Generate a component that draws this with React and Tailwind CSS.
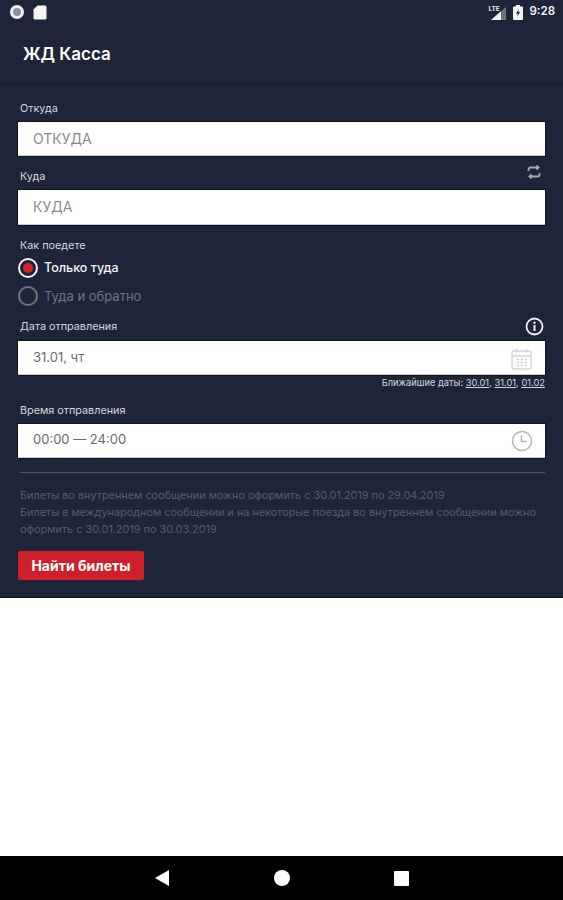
import React from 'react';

const font = { fontFamily: 'Inter, "Noto Sans", sans-serif' };

function Field({ value, children, height = 'h-[34px]', valueClass = 'text-[14px] text-[#8a8a8a]' }) {
  return (
    <div className={`flex items-center justify-between ${height} bg-white border-b border-[#c9ccd4] shadow-[0_0_0_1px_#10131f] pl-[15px] pr-[13px]`}>
      <span className={`leading-none ${valueClass}`}>{value}</span>
      {children}
    </div>
  );
}

function Label({ children, right, className = '' }) {
  return (
    <div className={`flex items-center justify-between h-[14px] mb-[7px] pl-[2px] ${className}`}>
      <span className="translate-y-[1px] text-[10.8px] leading-none text-[#d5d7dd]">{children}</span>
      {right}
    </div>
  );
}

export default function App() {
  return (
    <div style={font} className="flex flex-col h-[900px] w-[563px] overflow-hidden bg-white">
      {/* status bar */}
      <div className="flex items-center justify-between h-[24px] bg-[#1f2539] pl-[10px] pr-[8px]">
        <div className="flex items-center gap-[9px]">
          <div className="w-[14px] h-[14px] rounded-full bg-[#8d90a0] border-[3px] border-[#f2f2f2]" />
          <svg width="14" height="15" viewBox="0 0 14 15" fill="#f4f4f4"><path d="M4.5 0.5H12a1.5 1.5 0 0 1 1.5 1.5v11a1.5 1.5 0 0 1-1.5 1.5H2A1.5 1.5 0 0 1 0.5 13V4.5z" /></svg>
        </div>
        <div className="flex items-center">
          <div className="relative w-[20px] h-[15px]">
            <span className="absolute left-[2px] top-[1px] text-[6.5px] leading-[7px] font-bold text-[#e8e8e8]">LTE</span>
            <svg className="absolute left-[5px] top-[2px]" width="15" height="13" viewBox="0 0 15 13"><path d="M15 0V13H0z" fill="#6f7380" /><path d="M10 4.300V13H0z" fill="#f4f4f4" /></svg>
          </div>
          <svg className="ml-[7px]" width="10" height="15" viewBox="0 0 10 15"><path d="M3 0h4v1.5h2a1 1 0 0 1 1 1V14a1 1 0 0 1-1 1H1a1 1 0 0 1-1-1V2.500a1 1 0 0 1 1-1h2z" fill="#f4f4f4" /><path d="M5.800 4L3 8.500h1.700L4.200 11.500 7 7H5.300z" fill="#1f2539" /></svg>
          <span className="ml-[6px] text-[11.5px] leading-none font-semibold text-[#f4f4f4]">9:28</span>
        </div>
      </div>

      {/* app bar */}
      <div className="flex items-center h-[60px] bg-[#1f2539] border-b border-[#191e2f] pl-[23px] pt-[2px]">
        <h1 className="text-[17px] leading-none font-semibold text-white">ЖД Касса</h1>
      </div>

      {/* form */}
      <div className="bg-[#1f2539] pt-[17px] pb-[17px] px-[18px] border-b border-[#10131f]">
        <Label>Откуда</Label>
        <Field value="ОТКУДА" />

        <Label
          className="mt-[13px]"
          right={
            <svg className="mr-[4px] -mt-[9px]" width="14" height="14" viewBox="0 0 14 14" fill="none" stroke="#a6a9b3" strokeWidth="1.800">
              <path d="M1.500 6V4.500a2 2 0 0 1 2-2h8M9.500 0.500 11.500 2.500 9.500 4.500" />
              <path d="M12.500 8v1.500a2 2 0 0 1-2 2h-8M4.500 9.500 2.500 11.500 4.500 13.500" />
            </svg>
          }
        >
          Куда
        </Label>
        <Field value="КУДА" height="h-[35px]" />

        <div className="h-[14px] mt-[13px] pl-[2px] flex items-center text-[10.8px] leading-none text-[#d5d7dd]">
          <span className="translate-y-[1px]">Как поедете</span>
        </div>
        <div className="flex items-center gap-[6px] h-[20px] mt-[6px]">
          <div className="flex items-center justify-center w-[20px] h-[20px] rounded-full border-[2px] border-[#f2f2f2]">
            <div className="w-[10px] h-[10px] rounded-full bg-[#d9202c]" />
          </div>
          <span className="text-[12.5px] leading-none font-medium text-[#f4f4f4]">Только туда</span>
        </div>
        <div className="flex items-center gap-[6px] h-[20px] mt-[8px]">
          <div className="w-[20px] h-[20px] rounded-full border-[2px] border-[#6f7380]" />
          <span className="text-[13px] leading-none text-[#6f7380]">Туда и обратно</span>
        </div>

        <Label
          className="mt-[13px] !mb-[8px]"
          right={
            <svg className="mr-px" width="19" height="19" viewBox="0 0 19 19" fill="none">
              <circle cx="9.500" cy="9.500" r="8" stroke="#f0f0f0" strokeWidth="1.800" />
              <circle cx="9.500" cy="5.800" r="1.200" fill="#f0f0f0" />
              <rect x="8.500" y="8" width="2" height="6" fill="#f0f0f0" />
            </svg>
          }
        >
          Дата отправления
        </Label>
        <Field value="31.01, чт" valueClass="text-[13px] text-[#6a6a6a]">
          <svg className="translate-y-[1px]" width="21" height="22" viewBox="0 0 21 22" fill="none" stroke="#d3d3d3" strokeWidth="1.300">
            <rect x="1" y="3" width="19" height="18" rx="1" />
            <path d="M1 8h19M5.500 0.500v4M15.500 0.500v4" />
            <path d="M5.500 11.500h2.500M9.500 11.500h2.500M13.500 11.500h2.500M5.500 14.500h2.500M9.500 14.500h2.500M13.500 14.500h2.500M5.500 17.500h2.500M9.500 17.500h2.500M13.500 17.500h2.500" strokeWidth="1.400" />
          </svg>
        </Field>
        <div className="flex justify-end items-center h-[12px] mt-[2px] text-[9.3px] leading-none text-[#d5d7dd]">
          <span>Ближайшие даты:&nbsp;</span>
          <span className="underline">30.01</span>,&nbsp;
          <span className="underline">31.01</span>,&nbsp;
          <span className="underline">01.02</span>
        </div>

        <Label className="mt-[14px]">Время отправления</Label>
        <Field value="00:00 — 24:00" valueClass="-translate-y-[1px] text-[13px] text-[#6a6a6a]">
          <svg width="22" height="22" viewBox="0 0 22 22" fill="none" stroke="#b5b5b5" className="-mr-px">
            <circle cx="11" cy="11" r="9.500" strokeWidth="1.500" />
            <path d="M10.500 5.500v6h5" strokeWidth="1.500" />
          </svg>
        </Field>

        <div className="h-px mt-[14px] ml-[2px] bg-[#535869]" />

        <p className="mt-[14px] pl-[2px] text-[10.85px] leading-[17px] text-[#565b6c]">
          Билеты во внутреннем сообщении можно оформить с 30.01.2019 по 29.04.2019
          <br />
          Билеты в международном сообщении и на некоторые поезда во внутреннем сообщении можно оформить с 30.01.2019 по 30.03.2019
        </p>

        <button className="block mt-[13px] w-[126px] h-[29px] rounded-[2px] bg-[#ce1f2b] text-[14px] leading-none font-bold text-white">Найти билеты</button>
      </div>

      <div className="flex-1 bg-white" />

      {/* nav bar */}
      <div className="flex items-center h-[44px] bg-black">
        <svg className="ml-[155px]" width="14" height="16" viewBox="0 0 14 16" fill="#fff"><path d="M14 0V16L0 8z" /></svg>
        <div className="ml-[105px] w-[16px] h-[16px] rounded-full bg-white" />
        <div className="ml-[104px] w-[15px] h-[15px] rounded-[1px] bg-white" />
      </div>
    </div>
  );
}
